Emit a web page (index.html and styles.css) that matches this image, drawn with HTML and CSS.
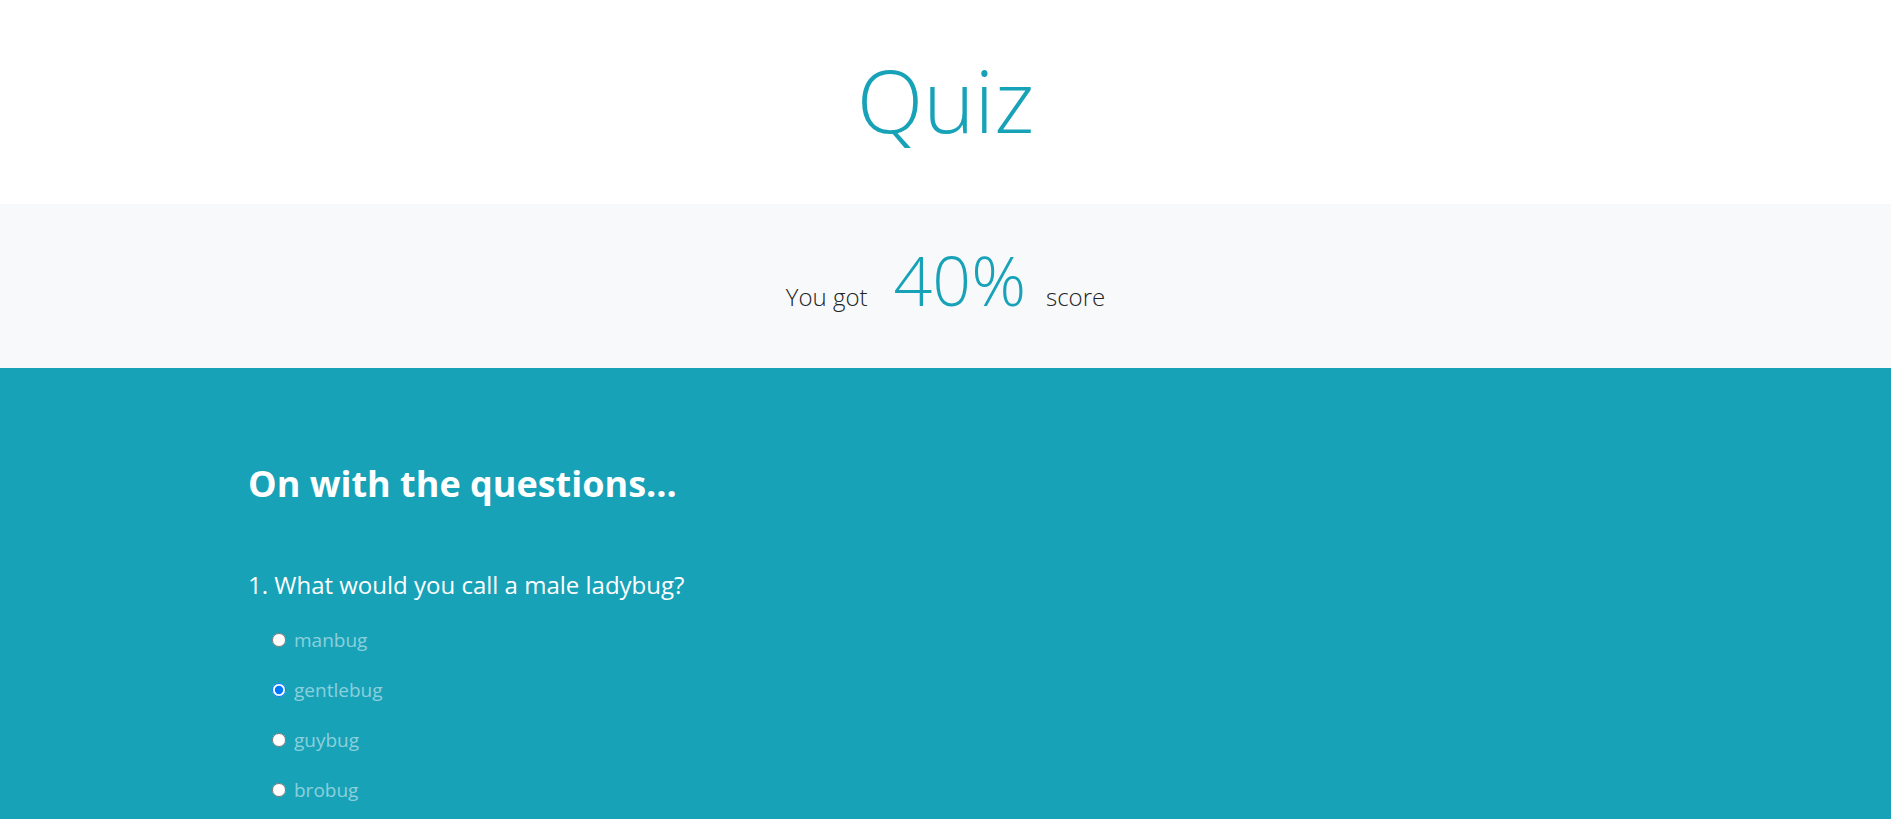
FILE: index.html
```html
<!DOCTYPE html>
<html lang="en">
<head>
<meta charset="utf-8">
<title>Quiz</title>
<link rel="stylesheet" href="styles.css">
</head>
<body>
<header class="masthead">
  <h1 class="title">Quiz</h1>
</header>
<section class="result">
  <div class="result-line">
    <span class="result-label">You got</span>
    <span class="result-value">40%</span>
    <span class="result-label">score</span>
  </div>
</section>
<main class="questions">
  <h2 class="questions-title">On with the questions...</h2>
  <div class="question">
    <p class="question-text">1. What would you call a male ladybug?</p>
    <label class="option"><input type="radio" name="q1"><span>manbug</span></label>
    <label class="option"><input type="radio" name="q1" checked><span>gentlebug</span></label>
    <label class="option"><input type="radio" name="q1"><span>guybug</span></label>
    <label class="option"><input type="radio" name="q1"><span>brobug</span></label>
  </div>
</main>
</body>
</html>
```
FILE: styles.css
```css
html, body {
  margin: 0;
  padding: 0;
}
body {
  font-family: "Open Sans", "Noto Sans", sans-serif;
  color: #212529;
  background: #17a2b8;
}
.masthead {
  background: #fff;
  height: 204px;
  display: flex;
  align-items: flex-start;
  justify-content: center;
}
.title {
  margin: 47px 0 0;
  font-size: 87px;
  font-weight: 300;
  line-height: 1.2;
  color: #17a2b8;
}
.result {
  background: #f8f9fa;
  height: 164px;
  display: flex;
  justify-content: center;
}
.result-line {
  display: flex;
  align-items: baseline;
  padding-top: 35px;
}
.result-label {
  font-size: 24px;
  font-weight: 300;
  color: #212529;
}
.result-value {
  font-size: 68px;
  font-weight: 300;
  color: #17a2b8;
  line-height: 1.2;
  margin: 0 20px 0 26px;
}
.questions {
  background: #17a2b8;
  padding: 94px 248px 40px;
  min-height: 451px;
  box-sizing: border-box;
}
.questions-title {
  margin: 0 0 63px;
  font-size: 36px;
  font-weight: 700;
  line-height: 1.2;
  color: #fff;
}
.question-text {
  margin: 0 0 14px;
  font-size: 24px;
  color: #fff;
}
.option {
  display: flex;
  align-items: center;
  gap: 8px;
  height: 50px;
  padding-left: 24px;
  font-size: 19px;
  color: rgba(255,255,255,0.5);
}
.option input {
  margin: 0;
  width: 14px;
  height: 14px;
}
```
